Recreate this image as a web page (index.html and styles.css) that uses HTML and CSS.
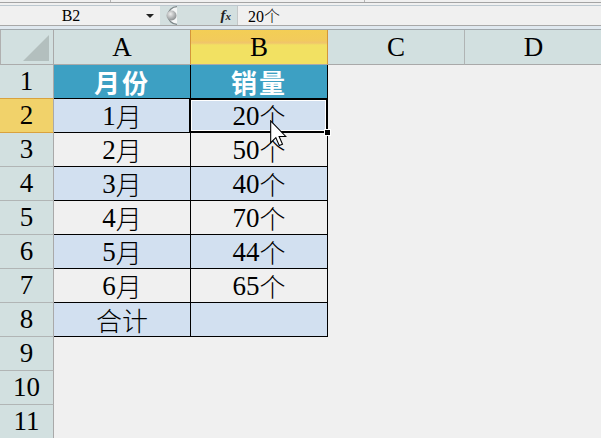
FILE: index.html
```html
<!DOCTYPE html>
<html>
<head>
<meta charset="utf-8">
<link rel="stylesheet" href="styles.css">
</head>
<body>
<div class="app">
  <div class="top1"><span class="tsep s1"></span><span class="tsep s2"></span></div>
  <div class="top2"></div>
  <div class="fbar">
    <div class="namebox"><span class="nametext">B2</span><span class="arrow"></span></div>
    <div class="mid">
      <svg class="knob" width="18" height="19" viewBox="0 0 18 19">
        <defs>
          <radialGradient id="kg" cx="0.4" cy="0.35" r="0.75">
            <stop offset="0" stop-color="#eeeeee"/>
            <stop offset="1" stop-color="#7f8486"/>
          </radialGradient>
        </defs>
        <path d="M17 0.7 A9 8.8 0 0 0 17 18.3" fill="#f4f6f6" stroke="#7d8789" stroke-width="1.3"/>
        <circle cx="11.5" cy="9.5" r="5" fill="url(#kg)"/>
      </svg>
      <span class="fx"><i>f</i><i class="x">x</i></span>
    </div>
    <div class="input">20<span class="k">个</span></div>
  </div>
  <div class="fsep"></div>
  <div class="sheet">
    <div class="row hdr">
      <div class="rh corner"><span class="tri"></span></div>
      <div class="ch cha">A</div>
      <div class="ch chsel">B</div>
      <div class="ch">C</div>
      <div class="ch chd">D</div>
    </div>
    <div class="row">
      <div class="rh rhpre">1</div>
      <div class="c head"><span class="k">月份</span></div>
      <div class="c head"><span class="k">销量</span></div>
      <div class="e"></div><div class="e"></div>
    </div>
    <div class="row">
      <div class="rh rhsel">2</div>
      <div class="c blue">1<span class="k">月</span></div>
      <div class="c blue">20<span class="k">个</span></div>
      <div class="e"></div><div class="e"></div>
    </div>
    <div class="row">
      <div class="rh">3</div>
      <div class="c gray">2<span class="k">月</span></div>
      <div class="c gray">50<span class="k">个</span></div>
      <div class="e"></div><div class="e"></div>
    </div>
    <div class="row">
      <div class="rh">4</div>
      <div class="c blue">3<span class="k">月</span></div>
      <div class="c blue">40<span class="k">个</span></div>
      <div class="e"></div><div class="e"></div>
    </div>
    <div class="row">
      <div class="rh">5</div>
      <div class="c gray">4<span class="k">月</span></div>
      <div class="c gray">70<span class="k">个</span></div>
      <div class="e"></div><div class="e"></div>
    </div>
    <div class="row">
      <div class="rh">6</div>
      <div class="c blue">5<span class="k">月</span></div>
      <div class="c blue">44<span class="k">个</span></div>
      <div class="e"></div><div class="e"></div>
    </div>
    <div class="row">
      <div class="rh">7</div>
      <div class="c gray">6<span class="k">月</span></div>
      <div class="c gray">65<span class="k">个</span></div>
      <div class="e"></div><div class="e"></div>
    </div>
    <div class="row">
      <div class="rh">8</div>
      <div class="c blue"><span class="k">合计</span></div>
      <div class="c blue"></div>
      <div class="e"></div><div class="e"></div>
    </div>
    <div class="row">
      <div class="rh">9</div>
      <div class="e"></div><div class="e"></div><div class="e"></div><div class="e"></div>
    </div>
    <div class="row">
      <div class="rh">10</div>
      <div class="e"></div><div class="e"></div><div class="e"></div><div class="e"></div>
    </div>
    <div class="row">
      <div class="rh">11</div>
      <div class="e"></div><div class="e"></div><div class="e"></div><div class="e"></div>
    </div>
    <div class="selbox"><span class="handle"></span></div>
    <svg class="cursor" width="17" height="27" viewBox="0 0 12.5 19.5">
      <path d="M0.5 0.5 L0.5 16.5 L4.3 12.8 L6.8 18.6 L9.2 17.6 L6.7 11.9 L11.6 11.9 Z" fill="#fff" stroke="#000" stroke-width="0.8" stroke-linejoin="miter"/>
    </svg>
  </div>
</div>
</body>
</html>
```
FILE: styles.css
```css
html, body {
  margin: 0;
  padding: 0;
  background: #f0f0f0;
}
.app {
  width: 601px;
  height: 438px;
  overflow: hidden;
  background: #f0f0f0;
  font-family: "Liberation Serif", serif;
  color: #000;
}
.k {
  font-family: "Noto Sans CJK SC", sans-serif;
  font-weight: 300;
}
.top1 {
  height: 2px;
  background: #f0f0f0;
  border-bottom: 1px solid #a4a4a4;
  position: relative;
}
.tsep {
  position: absolute;
  top: 0;
  width: 1px;
  height: 2px;
  background: #b4b4b4;
}
.s1 { left: 110px; }
.s2 { left: 364px; }
.top2 {
  height: 2px;
  background: #f0f0f0;
  border-bottom: 1px solid #bcc8d0;
}
.fbar {
  height: 19px;
  display: flex;
  background: #f0f0f0;
}
.namebox {
  width: 160px;
  display: flex;
  align-items: center;
}
.nametext {
  width: 142px;
  text-align: center;
  font-size: 16px;
  line-height: 19px;
}
.arrow {
  width: 0;
  height: 0;
  border-left: 4px solid transparent;
  border-right: 4px solid transparent;
  border-top: 4px solid #222;
  margin-left: 4px;
}
.mid {
  width: 77px;
  background: #d3dfdf;
  display: flex;
  align-items: center;
  justify-content: space-between;
  border-right: 1px solid #c4c8c8;
}
.knob {
  display: block;
}
.fx {
  font-family: "Liberation Serif", serif;
  font-weight: bold;
  font-size: 15px;
  line-height: 19px;
  margin-right: 6px;
  color: #222;
}
.fx .x {
  font-size: 11px;
}
.input {
  flex: 1;
  padding-left: 10px;
  font-size: 16px;
  line-height: 19px;
}
.fsep {
  height: 3px;
  border-top: 1px solid #a8a8a8;
  background: #dfe8ef;
}
.sheet {
  position: relative;
}
.row {
  display: flex;
  height: 34px;
}
.row.hdr {
  height: 36px;
  border-top: 1px solid #a0a8ac;
  box-sizing: border-box;
}
.rh {
  width: 54px;
  flex: none;
  box-sizing: border-box;
  background: #d2e0e0;
  border-right: 1px solid #a9a9a9;
  border-bottom: 1px solid #b1b5b5;
  display: flex;
  align-items: center;
  justify-content: center;
  font-size: 27px;
  line-height: 1;
}
.rh.corner {
  position: relative;
  border-bottom: 1px solid #ababab;
  border-left: 1px solid #b0b0b0;
}
.tri {
  position: absolute;
  right: 4px;
  bottom: 3px;
  width: 0;
  height: 0;
  border-left: 26px solid transparent;
  border-bottom: 26px solid #b3bfbe;
}
.rh.rhpre {
  border-bottom-color: #d9a23e;
}
.rh.rhsel {
  background: #f1d26a;
  border-bottom-color: #d9a23e;
}
.ch {
  width: 137px;
  flex: none;
  box-sizing: border-box;
  background: #d2e0e0;
  border-right: 1px solid #b0b4b4;
  border-bottom: 1px solid #a9a9a9;
  display: flex;
  align-items: center;
  justify-content: center;
  font-size: 27px;
  line-height: 1;
}
.ch.cha {
  border-right-color: #d4963a;
}
.ch.chsel {
  background: linear-gradient(#f3ce55 0%, #f2cb5b 30%, #f0c56b 38%, #f2e162 44%, #f2e162 100%);
  border-right-color: #d4963a;
}
.ch.chd {
  border-right: none;
}
.c {
  width: 137px;
  flex: none;
  box-sizing: border-box;
  border-right: 1px solid #000;
  border-bottom: 1px solid #000;
  display: flex;
  align-items: center;
  justify-content: center;
  font-size: 27px;
  line-height: 1;
  padding-top: 2px;
}
.c .k {
  font-size: 26px;
  position: relative;
  top: -1px;
}
.c.head {
  background: #3da0c3;
  color: #fff;
  letter-spacing: 2px;
}
.c.head .k {
  font-weight: bold;
}
.c.blue {
  background: #d2e0f0;
}
.c.gray {
  background: #f0f0f0;
}
.e {
  width: 137px;
  flex: none;
}
.selbox {
  position: absolute;
  left: 189px;
  top: 69px;
  width: 139px;
  height: 35px;
  box-sizing: border-box;
  border: 2px solid #000;
  box-shadow: inset 0 0 0 1px #fff;
}
.handle {
  position: absolute;
  right: -5px;
  bottom: -5px;
  width: 5px;
  height: 5px;
  background: #000;
  border: 1px solid #fff;
}
.cursor {
  position: absolute;
  left: 270px;
  top: 91px;
}
```
